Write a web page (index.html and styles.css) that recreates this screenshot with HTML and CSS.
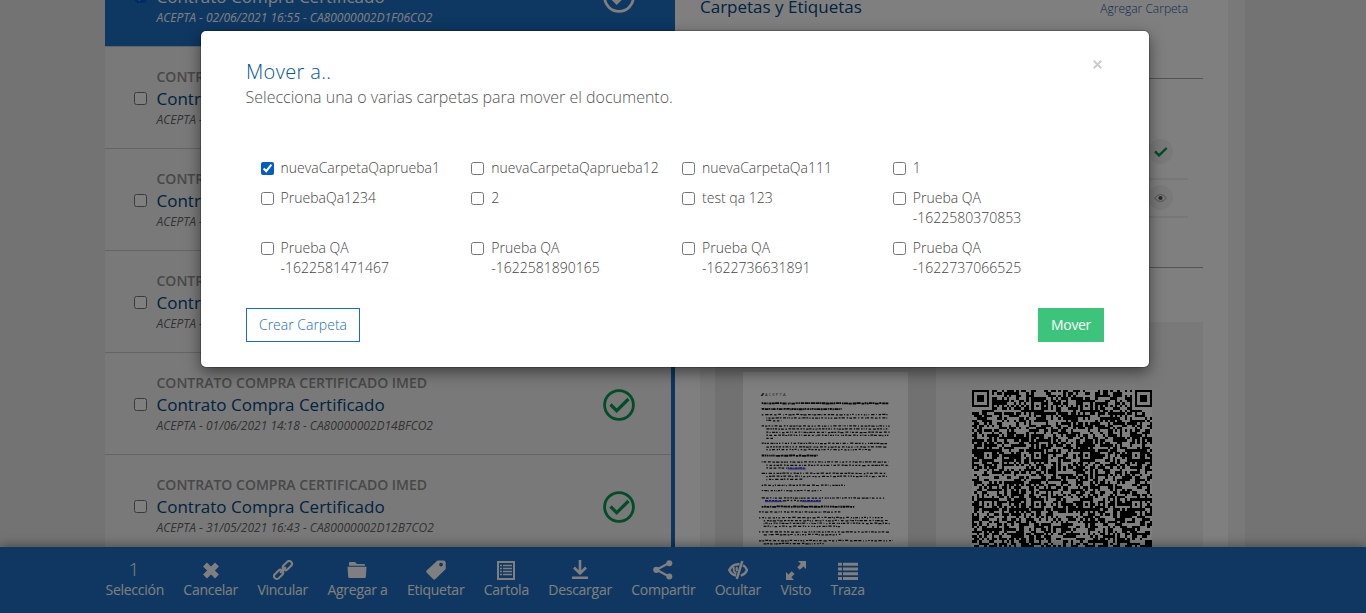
FILE: index.html
```html
<!DOCTYPE html>
<html lang="es">
<head>
<meta charset="utf-8">
<title>Mover a..</title>
<link rel="stylesheet" href="styles.css">
</head>
<body>
<svg class="sprite" width="0" height="0">
  <symbol id="ok" viewBox="0 0 32 32"><circle cx="16" cy="16" r="14.4" fill="none" stroke="currentColor" stroke-width="2.8"/><path d="M7.5 15.5l6.2 6.2L25.5 10" fill="none" stroke="currentColor" stroke-width="3.2"/></symbol>
</svg>
<div class="page">
  <main class="columns">
    <section class="list">
      <article class="row selected">
        <input type="checkbox" class="check" checked>
        <div class="info"><div class="kind">CONTRATO COMPRA CERTIFICADO IMED</div><div class="name">Contrato Compra Certificado</div><div class="meta">ACEPTA - 02/06/2021 16:55 - CA80000002D1F06CO2</div></div>
        <svg class="state"><use href="#ok"/></svg>
      </article>
      <article class="row">
        <input type="checkbox" class="check">
        <div class="info"><div class="kind">CONTRATO COMPRA CERTIFICADO IMED</div><div class="name">Contrato Compra Certificado</div><div class="meta">ACEPTA -</div></div>
      </article>
      <article class="row">
        <input type="checkbox" class="check">
        <div class="info"><div class="kind">CONTRATO COMPRA CERTIFICADO IMED</div><div class="name">Contrato Compra Certificado</div><div class="meta">ACEPTA -</div></div>
      </article>
      <article class="row">
        <input type="checkbox" class="check">
        <div class="info"><div class="kind">CONTRATO COMPRA CERTIFICADO IMED</div><div class="name">Contrato Compra Certificado</div><div class="meta">ACEPTA -</div></div>
      </article>
      <article class="row">
        <input type="checkbox" class="check">
        <div class="info"><div class="kind">CONTRATO COMPRA CERTIFICADO IMED</div><div class="name">Contrato Compra Certificado</div><div class="meta">ACEPTA - 01/06/2021 14:18 - CA80000002D14BFCO2</div></div>
        <svg class="state"><use href="#ok"/></svg>
      </article>
      <article class="row">
        <input type="checkbox" class="check">
        <div class="info"><div class="kind">CONTRATO COMPRA CERTIFICADO IMED</div><div class="name">Contrato Compra Certificado</div><div class="meta">ACEPTA - 31/05/2021 16:43 - CA80000002D12B7CO2</div></div>
        <svg class="state"><use href="#ok"/></svg>
      </article>
    </section>
    <section class="detail">
      <header class="detail-head"><h2>Carpetas y Etiquetas</h2><a class="add">Agregar Carpeta</a></header>
      <div class="signers">
        <div class="signer first"><span class="dot"><svg width="14" height="10" viewBox="0 0 14 10"><path d="M1 4.4l4 4L12.700 1" fill="none" stroke="#009a4e" stroke-width="2.4"/></svg></span></div>
        <div class="signer"><span class="dot"><svg width="13" height="8" viewBox="0 0 13 8"><path d="M.5 4Q6.500-3 12.500 4Q6.500 11 .5 4z" fill="none" stroke="#999" stroke-width=".8"/><circle cx="6.500" cy="4" r="2.100" fill="#555"/></svg></span></div>
      </div>
      <div class="preview">
        <div class="thumb-box"><div class="thumb"><svg id="doc" width="165" height="175" viewBox="-6 -39 495 525"></svg></div></div>
        <div class="qr-box"><svg id="qr" width="180" height="180" viewBox="0 0 73 73" shape-rendering="crispEdges"></svg></div>
      </div>
    </section>
  </main>
  <footer class="toolbar">
    <div class="tool"><span class="count">1</span><span>Selección</span></div>
    <div class="tool"><svg viewBox="0 0 20 20"><path d="M4 4.500l12 12M16 4.500l-12 12" stroke="currentColor" stroke-width="5.400"/></svg><span>Cancelar</span></div>
    <div class="tool"><svg viewBox="0 0 20 20"><g fill="none" stroke="currentColor" stroke-width="2.100" transform="rotate(-45 10 10)"><rect x="-1.500" y="7.200" width="10.500" height="5.600" rx="2.800"/><rect x="11" y="7.200" width="10.500" height="5.600" rx="2.800"/><path d="M6 10h8" stroke-width="2.400"/></g></svg><span>Vincular</span></div>
    <div class="tool"><svg viewBox="0 0 20 20"><path fill="currentColor" d="M2 5V3q0-1 1-1h5l2 2h7q1 0 1 1v.7H2zM.500 6.700h19L18.800 17q-.1 1-1.200 1H2.400q-1.100 0-1.200-1z"/></svg><span>Agregar a</span></div>
    <div class="tool"><svg viewBox="0 0 20 20"><path fill="currentColor" fill-rule="evenodd" d="M11.500.500h6.700l1.500 1.500v7L9 19.500H7.500L.300 12.200v-1.500zM15 2.700a1.900 1.900 0 1 0 .1 0z"/></svg><span>Etiquetar</span></div>
    <div class="tool"><svg viewBox="0 0 20 20"><path fill="none" stroke="currentColor" stroke-width="2" d="M2 2h16v17H2z"/><path stroke="currentColor" stroke-width="1.500" d="M4 5.500h2M7 5.500h9M4 8.500h2M7 8.500h9M4 11.500h2M7 11.500h9M4 14.500h2M7 14.500h9"/></svg><span>Cartola</span></div>
    <div class="tool"><svg viewBox="0 0 20 20"><path fill="none" stroke="currentColor" stroke-width="2.600" d="M10 0v13M4 7.500l6 6 6-6M2 17.800h16"/></svg><span>Descargar</span></div>
    <div class="tool"><svg viewBox="0 0 20 20"><path fill="none" stroke="currentColor" stroke-width="2.200" d="M16 3L3.500 9.800 16 16.500"/><g fill="currentColor"><circle cx="16.300" cy="3.200" r="3"/><circle cx="3.300" cy="9.800" r="3.100"/><circle cx="16.300" cy="16.400" r="3"/></g></svg><span>Compartir</span></div>
    <div class="tool"><svg viewBox="0 0 20 20"><g fill="none" stroke="currentColor"><path stroke-width="2.400" d="M11.500 4.300Q5 3.500 1.200 10Q3.500 14.700 8 15.500M15 5.300Q18 7 19 10Q17.500 14 12.800 15.700"/><path stroke-width="2.500" d="M14.300 1L8.800 19"/><path stroke-width="2" d="M5.800 7Q4.800 11.500 8.300 13.500M9.200 7.200q-1.500 2 .2 3.800"/></g></svg><span>Ocultar</span></div>
    <div class="tool"><svg viewBox="0 0 20 20"><path fill="currentColor" d="M12 1h8v8l-2.500-2.500-3.700 3.200-2.500-2.500 3.400-3.500zM8 20H0v-8l2.500 2.500 3.200-3.200 2.800 2.800-3.200 3.200z"/></svg><span>Visto</span></div>
    <div class="tool"><svg viewBox="0 0 20 20"><path stroke="currentColor" stroke-width="3" d="M0 4.200h4M5 4.200h15M0 9h4M5 9h15M0 13.700h4M5 13.700h15M0 18.400h4M5 18.400h15"/></svg><span>Traza</span></div>
  </footer>
</div>
<div class="backdrop">
  <div class="modal">
    <header class="modal-head"><h1>Mover a..</h1><svg class="close" width="9" height="9" viewBox="0 0 9 9"><path d="M.8.800l7.400 7.400M8.200.800L.8 8.200" stroke="#ccc" stroke-width="2"/></svg></header>
    <p class="lead">Selecciona una o varias carpetas para mover el documento.</p>
    <div class="folders">
      <label class="folder"><input type="checkbox" checked><span>nuevaCarpetaQaprueba1</span></label>
      <label class="folder"><input type="checkbox"><span>nuevaCarpetaQaprueba12</span></label>
      <label class="folder"><input type="checkbox"><span>nuevaCarpetaQa111</span></label>
      <label class="folder"><input type="checkbox"><span>1</span></label>
      <label class="folder"><input type="checkbox"><span>PruebaQa1234</span></label>
      <label class="folder"><input type="checkbox"><span>2</span></label>
      <label class="folder"><input type="checkbox"><span>test qa 123</span></label>
      <label class="folder"><input type="checkbox"><span>Prueba QA<br>-1622580370853</span></label>
      <label class="folder"><input type="checkbox"><span>Prueba QA<br>-1622581471467</span></label>
      <label class="folder"><input type="checkbox"><span>Prueba QA<br>-1622581890165</span></label>
      <label class="folder"><input type="checkbox"><span>Prueba QA<br>-1622736631891</span></label>
      <label class="folder"><input type="checkbox"><span>Prueba QA<br>-1622737066525</span></label>
    </div>
    <div class="actions"><button class="btn outline">Crear Carpeta</button><button class="btn primary">Mover</button></div>
  </div>
</div>
<script src="app.js"></script>
</body>
</html>
```
FILE: styles.css
```css
* { box-sizing: border-box; }
body { margin: 0; height: 613px; overflow: hidden; background: #e6e6e6; font-family: "Open Sans", sans-serif; }
h1, h2, p { margin: 0; font-weight: 300; }
.sprite { display: block; }
.page { height: 613px; display: flex; flex-direction: column; }
.columns { height: 547px; overflow: hidden; display: flex; width: 1140px; margin-left: 105px; background: #f2f2f2; }
.list { width: 570px; margin-top: -56px; border-right: 4px solid #1c6cbe; }
.row { height: 102px; display: flex; border-bottom: 1px solid #c8c8c8; padding: 21px 36px 0 29px; position: relative; }
.row.selected { height: 103px; padding-top: 22px; background: #1c6fc4; margin-right: -4px; padding-right: 40px; }
.check { width: 13px; height: 13px; margin: 24px 9.5px 0 0; flex: none; accent-color: #005cc8; }
.info { flex: 1; white-space: nowrap; }
.kind { font-size: 14px; line-height: 18px; font-weight: 600; color: #909090; }
.name { font-size: 17px; line-height: 26px; color: #00467f; }
.meta { font-size: 12px; line-height: 15px; font-style: italic; color: #666; }
.selected .kind, .selected .name, .selected .meta { color: #fff; }
.state { width: 32px; height: 32px; margin-top: 15px; color: #009a4e; }
.selected .state { color: #fff; }
.detail { width: 553px; background: #fff; padding: 0 25px; display: flex; flex-direction: column; }
.detail-head { height: 79px; display: flex; justify-content: space-between; border-bottom: 1px solid #a8a8a8; padding-right: 15px; }
.detail-head h2 { font-size: 17px; line-height: 24px; margin-top: -5px; font-weight: 400; color: #00467f; }
.add { font-size: 12px; line-height: 17px; color: #1c57a5; font-weight: 300; }
.signers { height: 189px; border-bottom: 1px solid #a8a8a8; padding: 60px 15px 0 15px; }
.signer { height: 38px; border-bottom: 2px solid #eee; display: flex; justify-content: flex-end; padding: 5px 15px 0 0; }
.signer.first { height: 41px; padding-top: 0; }
.dot { width: 25px; height: 25px; border-radius: 50%; background: #f2f2f2; display: flex; align-items: center; justify-content: center; }
.preview { margin-top: 54px; height: 225px; background: #f2f2f2; display: flex; padding-left: 15px; }
.thumb-box { width: 221px; background: #e2e2e2; padding: 50px 28px 0; }
.thumb { background: #fff; height: 175px; }
.thumb svg { display: block; }
.qr-box { padding: 68px 0 0 36px; height: 225px; overflow: hidden; }
.toolbar { height: 66px; background: #1e6fc2; color: #fff; display: flex; gap: 19.4px; padding: 12px 0 0 105.5px; box-shadow: 0 -2px 10px rgba(0,0,0,.35); position: relative; }
.tool { display: flex; flex-direction: column; align-items: center; font-size: 14px; line-height: 20px; white-space: nowrap; letter-spacing: -.27px; }
.tool svg { width: 20px; height: 20px; margin: 1px 0 0; }
.count { font-size: 19px; line-height: 21px; font-weight: 300; }
.tool .count { margin-left: -2px; }
.backdrop { position: absolute; inset: 0; background: rgba(0,0,0,.5); }
.modal { width: 948px; height: 336px; margin: 31px 0 0 201px; background: #fff; border-radius: 5px; box-shadow: 0 0 0 1px rgba(0,0,0,.2), 0 5px 15px rgba(0,0,0,.5); padding: 26px 45px 0; }
.modal-head { display: flex; justify-content: space-between; height: 29px; }
.modal-head h1 { font-size: 20px; line-height: 29px; color: #00569c; letter-spacing: .35px; }
.close { margin: 3px 2px 0 0; }
.lead { font-size: 16px; line-height: 22px; color: #555; font-weight: 300; margin-left: -.5px; }
.folders { display: grid; grid-template-columns: repeat(4, 210.75px); row-gap: 10px; margin-top: 50px; padding-left: 14.6px; }
.folder { display: flex; font-size: 14px; line-height: 20px; font-weight: 300; color: #444; white-space: nowrap; }
.folder input { width: 13px; height: 13px; margin: 4px 7px 0 0; flex: none; accent-color: #005cc8; }
.actions { display: flex; justify-content: space-between; margin-top: 30px; }
.btn { height: 34px; font: 14px/20px "Open Sans", sans-serif; padding: 0 11px; border: 1px solid #1c6dbf; background: #fff; color: #1c6dbf; }
.btn.outline { width: 114px; font-weight: 300; }
.btn.primary { width: 66px; background: #3cc47c; border-color: #3cc47c; color: #fff; letter-spacing: -.35px; }
```
FILE: app.js
```js
const NS = 'http://www.w3.org/2000/svg';
let seed = 20210602;
const rnd = () => (seed = (seed * 1103515245 + 12345) % 2147483648) / 2147483648;
const add = (parent, tag, attrs) => {
  const e = document.createElementNS(NS, tag);
  for (const k in attrs) e.setAttribute(k, attrs[k]);
  parent.appendChild(e);
  return e;
};

// QR code: 73 modules per side, with finder and alignment patterns
const N = 73;
const grid = Array.from({ length: N }, () => Array.from({ length: N }, () => rnd() > 0.48));
const square = (cx, cy, r, isDark) => {
  for (let y = -r; y <= r; y++) for (let x = -r; x <= r; x++) {
    const px = cx + x, py = cy + y;
    if (px >= 0 && py >= 0 && px < N && py < N) grid[py][px] = isDark(Math.max(Math.abs(x), Math.abs(y)));
  }
};
for (let i = 8; i < N - 8; i++) grid[6][i] = grid[i][6] = i % 2 === 0;
for (const a of [6, 26, 46, 66]) for (const b of [6, 26, 46, 66]) square(a, b, 2, d => d !== 1);
for (const [a, b] of [[3, 3], [69, 3], [3, 69]]) square(a, b, 4, d => d < 2 || d === 3);
let path = '';
grid.forEach((line, y) => line.forEach((on, x) => { if (on) path += `M${x} ${y}h1v1h-1z`; }));
add(document.getElementById('qr'), 'rect', { width: N, height: N, fill: '#fff' });
add(document.getElementById('qr'), 'path', { d: path });

// Document thumbnail: [x, y, width, style] for each line, b = bold, u = link
const doc = document.getElementById('doc');
const lines = [
  [50,55,380,'b'],[50,72,240,'b'],[50,89,380],[64,99,368],[64,107,46],[50,123,384],[64,132,366],[64,142,370],[64,151,368],[64,160,20],
  [50,175,376],[64,186,360],[64,194,316],[50,212,168,'b'],[50,231,380],[64,241,368],[64,249,64],[128,249,54,'u'],
  [50,265,374],[64,274,362],[64,283,108],[50,301,250],[50,317,184],[50,339,368],[60,347,52,'u'],[114,347,58],[172,347,56,'u'],
  [50,365,280,'b'],[42,381,244],[42,398,376],[56,407,374],[56,415,378],[56,424,230],[42,441,390],[56,449,234],[42,467,402],[56,476,180]
];
for (const [x, y, w, s] of lines) {
  const end = x + w;
  let p = x;
  let d = '';
  while (p < end) {
    const len = Math.min(2 + rnd() * (s === 'b' ? 11 : 8), end - p);
    d += `M${p.toFixed(1)} ${(y + (rnd() - 0.5) * 1.5).toFixed(1)}h${len.toFixed(1)}`;
    p += len + (s ? 1 + rnd() * 1.5 : 2 + rnd() * 4);
  }
  add(doc, 'path', { d, stroke: s === 'u' ? '#2424d8' : '#111', 'stroke-width': s === 'b' ? 5.5 : 3.7 });
  if (s === 'u') add(doc, 'path', { d: `M${x} ${y + 3}h${w}`, stroke: '#0000c8', 'stroke-width': 2 });
}
const logo = add(doc, 'text', { x: 60, y: 34, 'font-size': 12, 'letter-spacing': 3.6, fill: '#333', 'font-family': 'Open Sans' });
logo.textContent = 'ACEPTA';
add(doc, 'path', { d: 'M47 33l5-8h6l-5 8z', fill: '#333' });
```
